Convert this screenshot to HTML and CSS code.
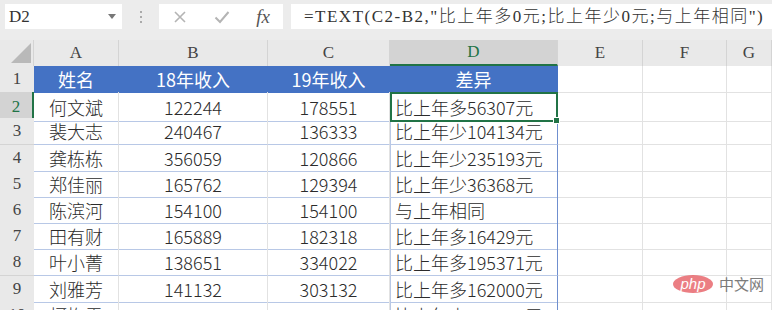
FILE: index.html
```html
<!DOCTYPE html>
<html lang="zh-CN">
    <head>
        <meta charset="utf-8">
        <title>差异 - 工作表</title>
        <link rel="stylesheet" href="styles.css">
    </head>
    <body>
        <div id="toolbar">
            <div id="nameBox">
                <span>D2</span>
                <svg class="dropArrow" width="8" height="5" viewBox="0 0 8 5"><path d="M0 0H8L4 5Z" fill="#777"/></svg>
            </div>
            <div id="grip">
                <span></span><span></span><span></span>
            </div>
            <div id="fxButtons">
                <svg width="14" height="14" viewBox="0 0 14 14"><path d="M2 2L12 12M12 2L2 12" stroke="#b4b4b4" stroke-width="1.6" fill="none"/></svg>
                <svg width="16" height="14" viewBox="0 0 16 14"><path d="M1.5 7.5L6 12L14.5 2" stroke="#b4b4b4" stroke-width="2" fill="none"/></svg>
                <span class="fxLabel">fx</span>
            </div>
            <div id="formulaBox">=TEXT(C2-B2,"比上年多0元;比上年少0元;与上年相同")</div>
        </div>

        <div id="sheet">
            <div class="row headRow">
                <div class="corner"><span class="cornerMark"></span></div>
                <div class="colHead">A</div>
                <div class="colHead">B</div>
                <div class="colHead">C</div>
                <div class="colHead activeCol">D</div>
                <div class="colHead">E</div>
                <div class="colHead">F</div>
                <div class="colHead">G</div>
            </div>

            <div class="row">
                <div class="rowHead">1</div>
                <div class="cell title">姓名</div>
                <div class="cell title">18年收入</div>
                <div class="cell title">19年收入</div>
                <div class="cell title">差异</div>
                <div class="cell"></div><div class="cell"></div><div class="cell"></div>
            </div>

            <div class="row">
                <div class="rowHead activeRow">2</div>
                <div class="cell data">何文斌</div>
                <div class="cell data">122244</div>
                <div class="cell data">178551</div>
                <div class="cell data diff selected">比上年多56307元<span class="fillHandle"></span></div>
                <div class="cell"></div><div class="cell"></div><div class="cell"></div>
            </div>

            <div class="row">
                <div class="rowHead">3</div>
                <div class="cell data">裴大志</div>
                <div class="cell data">240467</div>
                <div class="cell data">136333</div>
                <div class="cell data diff">比上年少104134元</div>
                <div class="cell"></div><div class="cell"></div><div class="cell"></div>
            </div>

            <div class="row">
                <div class="rowHead">4</div>
                <div class="cell data">龚栋栋</div>
                <div class="cell data">356059</div>
                <div class="cell data">120866</div>
                <div class="cell data diff">比上年少235193元</div>
                <div class="cell"></div><div class="cell"></div><div class="cell"></div>
            </div>

            <div class="row">
                <div class="rowHead">5</div>
                <div class="cell data">郑佳丽</div>
                <div class="cell data">165762</div>
                <div class="cell data">129394</div>
                <div class="cell data diff">比上年少36368元</div>
                <div class="cell"></div><div class="cell"></div><div class="cell"></div>
            </div>

            <div class="row">
                <div class="rowHead">6</div>
                <div class="cell data">陈滨河</div>
                <div class="cell data">154100</div>
                <div class="cell data">154100</div>
                <div class="cell data diff">与上年相同</div>
                <div class="cell"></div><div class="cell"></div><div class="cell"></div>
            </div>

            <div class="row">
                <div class="rowHead">7</div>
                <div class="cell data">田有财</div>
                <div class="cell data">165889</div>
                <div class="cell data">182318</div>
                <div class="cell data diff">比上年多16429元</div>
                <div class="cell"></div><div class="cell"></div><div class="cell"></div>
            </div>

            <div class="row">
                <div class="rowHead">8</div>
                <div class="cell data">叶小菁</div>
                <div class="cell data">138651</div>
                <div class="cell data">334022</div>
                <div class="cell data diff">比上年多195371元</div>
                <div class="cell"></div><div class="cell"></div><div class="cell"></div>
            </div>

            <div class="row">
                <div class="rowHead">9</div>
                <div class="cell data">刘雅芳</div>
                <div class="cell data">141132</div>
                <div class="cell data">303132</div>
                <div class="cell data diff">比上年多162000元</div>
                <div class="cell"></div><div class="cell"></div><div class="cell"></div>
            </div>

            <div class="row">
                <div class="rowHead">10</div>
                <div class="cell data">柯梅雪</div>
                <div class="cell data">252541</div>
                <div class="cell data">149279</div>
                <div class="cell data diff">比上年少103262元</div>
                <div class="cell"></div><div class="cell"></div><div class="cell"></div>
            </div>

            <div id="watermark">
                <span class="phpBadge">php</span>
                <span class="phpText">中文网</span>
            </div>
        </div>
    </body>
</html>
```

FILE: styles.css
```css
body{
    margin: 0;
    width: 772px;
    height: 310px;
    overflow: hidden;
    background-color: #ffffff;
    font-family: "Noto Sans CJK SC", sans-serif;
}

#toolbar{
    display: flex;
    align-items: flex-start;
    height: 40px;
    padding: 4px 0 0 5px;
    box-sizing: border-box;
    background-color: #ececec;
}

#nameBox{
    display: flex;
    align-items: center;
    justify-content: space-between;
    width: 117px;
    height: 25px;
    padding: 0 6px 0 4px;
    box-sizing: border-box;
    background-color: #ffffff;
    font-family: "Liberation Serif", "Noto Sans CJK SC", serif;
    font-size: 17px;
    color: #333;
}

#grip{
    display: flex;
    flex-direction: column;
    align-items: center;
    justify-content: center;
    gap: 3px;
    width: 37px;
    height: 25px;
}

#grip span{
    width: 2px;
    height: 2px;
    background-color: #aaa;
}

#fxButtons{
    display: flex;
    align-items: center;
    justify-content: space-between;
    width: 124px;
    height: 25px;
    padding: 0 13px 0 14px;
    box-sizing: border-box;
    background-color: #ffffff;
}

.fxLabel{
    font-family: "Liberation Serif", serif;
    font-style: italic;
    font-size: 19px;
    color: #555;
    line-height: 25px;
}

#formulaBox{
    flex: 1;
    height: 25px;
    margin-left: 8px;
    padding-left: 13px;
    background-color: #ffffff;
    font-family: "Liberation Serif", "Noto Sans CJK SC", serif;
    font-size: 17px;
    font-weight: 300;
    letter-spacing: 1.5px;
    line-height: 25px;
    color: #333;
    white-space: nowrap;
    overflow: hidden;
}

#sheet{
    position: relative;
}

.row{
    display: grid;
    grid-template-columns: 34px 85px 149px 122px 168px 85px 84px 1fr;
    height: 26.2px;
}

.headRow{
    height: 26px;
    background-color: #e9e9e9;
}

.corner{
    display: flex;
    align-items: flex-end;
    justify-content: flex-end;
    padding: 0 2px 3px 0;
    border-right: 1px solid #d4d4d4;
}

.cornerMark{
    width: 0;
    height: 0;
    border-left: 20px solid transparent;
    border-bottom: 20px solid #b9b9b9;
}

.colHead{
    display: flex;
    align-items: center;
    justify-content: center;
    border-right: 1px solid #d4d4d4;
    font-family: "Liberation Serif", serif;
    font-size: 17px;
    color: #444;
}

.activeCol{
    background-color: #d3d3d3;
    border-bottom: 2px solid #217346;
    color: #217346;
}

.rowHead{
    display: flex;
    align-items: center;
    justify-content: center;
    background-color: #e9e9e9;
    border-bottom: 1px solid #d4d4d4;
    font-family: "Liberation Serif", serif;
    font-size: 17px;
    color: #444;
}

.activeRow{
    background-color: #d3d3d3;
    border-right: 2px solid #217346;
    color: #217346;
}

.cell{
    display: flex;
    align-items: center;
    justify-content: center;
    box-sizing: border-box;
    border-right: 1px solid #e2e2e2;
    border-bottom: 1px solid #e2e2e2;
    font-size: 18px;
    font-weight: 300;
    color: #2b2b2b;
    white-space: nowrap;
}

.title{
    background-color: #4472c4;
    border-right-color: #4472c4;
    border-bottom-color: #4472c4;
    font-weight: 400;
    color: #ffffff;
}

.data{
    border-bottom-color: #b8c8e6;
}

.diff{
    justify-content: flex-start;
    padding-left: 4px;
    border-left: 1px solid #b8c8e6;
    border-right-color: #6f8fcf;
}

.selected{
    position: relative;
    border: 2px solid #217346;
    padding-left: 3px;
}

.fillHandle{
    position: absolute;
    right: -4px;
    bottom: -4px;
    width: 5px;
    height: 5px;
    background-color: #217346;
    border: 1px solid #ffffff;
}

#watermark{
    position: absolute;
    left: 673px;
    top: 233px;
    display: flex;
    align-items: center;
    gap: 6px;
    opacity: 0.85;
}

.phpBadge{
    width: 40px;
    height: 18px;
    border-radius: 50%;
    background-color: #e8686e;
    color: #ffffff;
    font-family: "Liberation Sans", sans-serif;
    font-style: italic;
    font-size: 15px;
    line-height: 17px;
    text-align: center;
}

.phpText{
    font-size: 15px;
    color: #666;
}
```
